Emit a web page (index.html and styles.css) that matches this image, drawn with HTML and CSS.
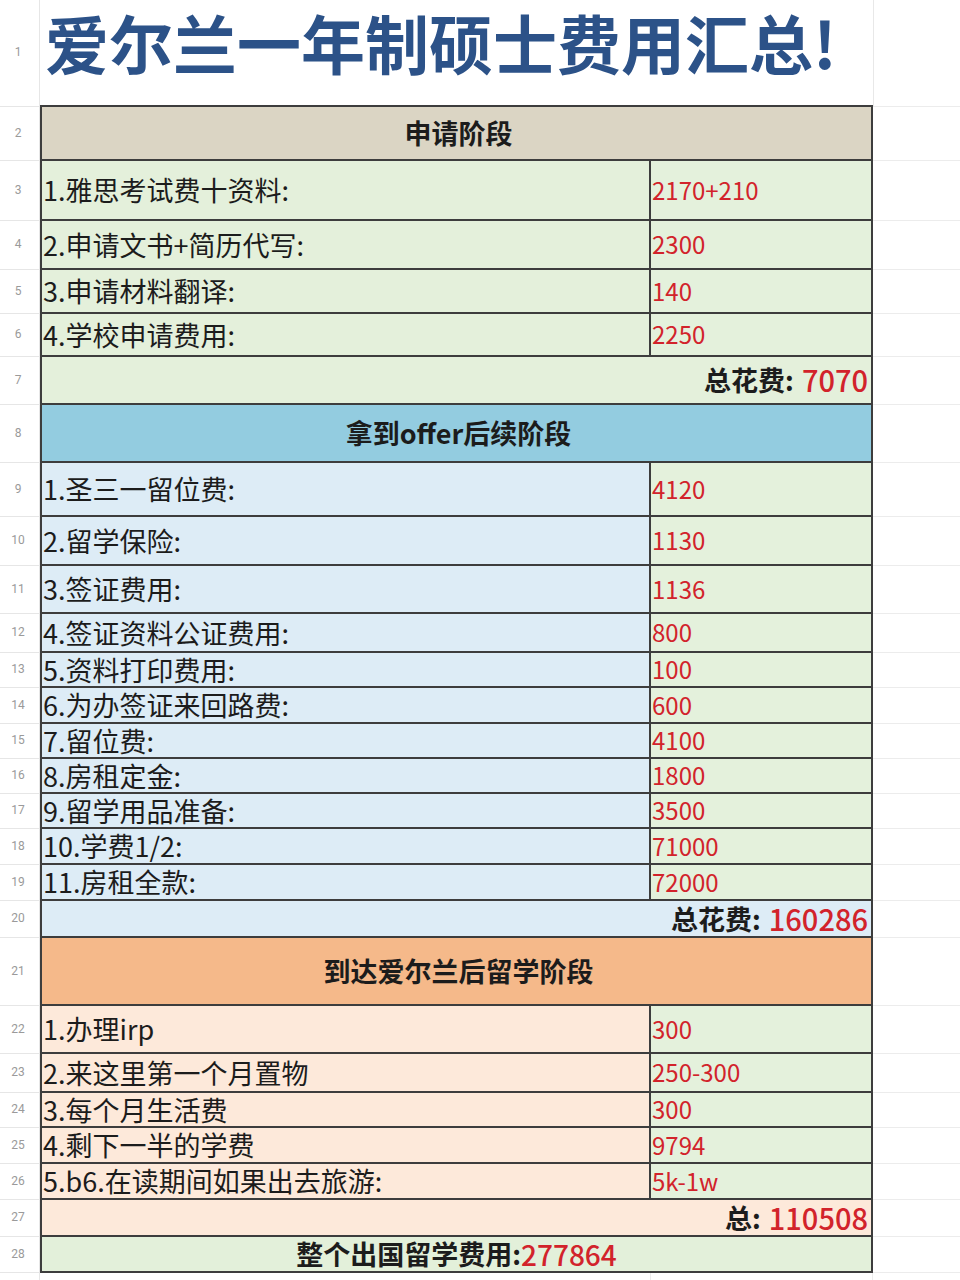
FILE: index.html
```html
<!DOCTYPE html>
<html lang="zh">
<head>
<meta charset="utf-8">
<title>爱尔兰一年制硕士费用汇总</title>
<link rel="stylesheet" href="styles.css">
</head>
<body>
<div class="sheet">
  <div class="rn">1</div><div class="title">爱尔兰一年制硕士费用汇总!</div><div class="pad first"></div>

  <div class="rn">2</div><div class="head s1">申请阶段</div><div class="pad"></div>
  <div class="rn">3</div><div class="label g">1.雅思考试费十资料:</div><div class="val">2170+210</div><div class="pad"></div>
  <div class="rn">4</div><div class="label g">2.申请文书+简历代写:</div><div class="val">2300</div><div class="pad"></div>
  <div class="rn">5</div><div class="label g">3.申请材料翻译:</div><div class="val">140</div><div class="pad"></div>
  <div class="rn">6</div><div class="label g">4.学校申请费用:</div><div class="val">2250</div><div class="pad"></div>
  <div class="rn">7</div><div class="total g">总花费: <span class="num">7070</span></div><div class="pad"></div>

  <div class="rn">8</div><div class="head s2">拿到offer后续阶段</div><div class="pad"></div>
  <div class="rn">9</div><div class="label b">1.圣三一留位费:</div><div class="val">4120</div><div class="pad"></div>
  <div class="rn">10</div><div class="label b">2.留学保险:</div><div class="val">1130</div><div class="pad"></div>
  <div class="rn">11</div><div class="label b">3.签证费用:</div><div class="val">1136</div><div class="pad"></div>
  <div class="rn">12</div><div class="label b">4.签证资料公证费用:</div><div class="val">800</div><div class="pad"></div>
  <div class="rn">13</div><div class="label b">5.资料打印费用:</div><div class="val">100</div><div class="pad"></div>
  <div class="rn">14</div><div class="label b">6.为办签证来回路费:</div><div class="val">600</div><div class="pad"></div>
  <div class="rn">15</div><div class="label b">7.留位费:</div><div class="val">4100</div><div class="pad"></div>
  <div class="rn">16</div><div class="label b">8.房租定金:</div><div class="val">1800</div><div class="pad"></div>
  <div class="rn">17</div><div class="label b">9.留学用品准备:</div><div class="val">3500</div><div class="pad"></div>
  <div class="rn">18</div><div class="label b">10.学费1/2:</div><div class="val">71000</div><div class="pad"></div>
  <div class="rn">19</div><div class="label b">11.房租全款:</div><div class="val">72000</div><div class="pad"></div>
  <div class="rn">20</div><div class="total b">总花费: <span class="num">160286</span></div><div class="pad"></div>

  <div class="rn">21</div><div class="head s3">到达爱尔兰后留学阶段</div><div class="pad"></div>
  <div class="rn">22</div><div class="label o">1.办理irp</div><div class="val">300</div><div class="pad"></div>
  <div class="rn">23</div><div class="label o">2.来这里第一个月置物</div><div class="val">250-300</div><div class="pad"></div>
  <div class="rn">24</div><div class="label o">3.每个月生活费</div><div class="val">300</div><div class="pad"></div>
  <div class="rn">25</div><div class="label o">4.剩下一半的学费</div><div class="val">9794</div><div class="pad"></div>
  <div class="rn">26</div><div class="label o">5.b6.在读期间如果出去旅游:</div><div class="val">5k-1w</div><div class="pad"></div>
  <div class="rn">27</div><div class="total o">总: <span class="num">110508</span></div><div class="pad"></div>

  <div class="rn">28</div><div class="grand">整个出国留学费用:<span class="num">277864</span></div><div class="pad"></div>
  <div class="rn"></div><div class="blank"></div><div class="blank"></div><div class="pad"></div>
</div>
</body>
</html>
```

FILE: styles.css
```css
html, body {
  margin: 0;
  padding: 0;
  background: #ffffff;
  overflow: hidden;
  height: 1280px;
}

.sheet {
  display: grid;
  grid-template-columns: 40px 611px 222px 1fr;
  grid-template-rows: 107px 54px 60px 49px 44px 43px 48px 58px 54px 49px 48px 39px 35px 36px 35px 35px 35px 36px 36px 37px 68px 48px 39px 35px 36px 36px 37px 36px 40px;
  font-family: "Noto Sans CJK SC", "Noto Sans", sans-serif;
  color: #1c1c1c;
}

.sheet > div {
  box-sizing: border-box;
  display: flex;
  align-items: center;
  white-space: nowrap;
  line-height: 1.1;
  min-width: 0;
}

.rn {
  justify-content: center;
  font-family: Roboto, "Noto Sans", sans-serif;
  font-size: 12px;
  color: #9a9a9a;
  border-bottom: 1px solid #e6e6e6;
  border-right: 1px solid #e6e6e6;
  padding-right: 3px;
}

.pad {
  border-bottom: 1px solid #ececec;
}

.pad.first {
  border-left: 1px solid #e8e8e8;
}

.title {
  grid-column: span 2;
  align-items: flex-start !important;
  padding: 6px 0 0 5px;
  font-size: 64px;
  font-weight: 700;
  line-height: 70px !important;
  color: #2c5288;
  border-bottom: 2px solid #3d3d3d;
}

.head {
  grid-column: span 2;
  justify-content: center;
  font-size: 27px;
  font-weight: 700;
  border-left: 2px solid #3d3d3d;
  border-right: 2px solid #3d3d3d;
  border-bottom: 2px solid #3d3d3d;
  padding-left: 4px;
}

.head.s1 { background: #dbd5c4; }
.head.s2 { background: #93cce0; }
.head.s3 { background: #f5b98a; }

.label {
  font-size: 27px;
  padding-left: 1px;
  border-left: 2px solid #3d3d3d;
  border-right: 2px solid #3d3d3d;
  border-bottom: 2px solid #3d3d3d;
}

.label.g, .total.g { background: #e4f0db; }
.label.b, .total.b { background: #ddecf6; }
.label.o, .total.o { background: #fde9da; }

.val {
  font-size: 24px;
  color: #d2232b;
  background: #e4f1dc;
  padding-left: 1px;
  border-right: 2px solid #3d3d3d;
  border-bottom: 2px solid #3d3d3d;
}

.total {
  grid-column: span 2;
  justify-content: flex-end;
  padding-right: 3px;
  font-size: 27px;
  font-weight: 700;
  border-left: 2px solid #3d3d3d;
  border-right: 2px solid #3d3d3d;
  border-bottom: 2px solid #3d3d3d;
}

.total .num {
  margin-left: 8px;
  font-size: 29px;
  font-weight: 500;
  color: #d2232b;
}

.grand {
  grid-column: span 2;
  justify-content: center;
  font-size: 27px;
  font-weight: 700;
  background: #e3f0da;
  border-left: 2px solid #3d3d3d;
  border-right: 2px solid #3d3d3d;
  border-bottom: 2px solid #3d3d3d;
}

.grand .num {
  font-weight: 500;
  font-size: 28px;
  color: #d2232b;
}

.blank {
  border-right: 1px solid #ececec;
  border-bottom: 1px solid #ececec;
}
```
